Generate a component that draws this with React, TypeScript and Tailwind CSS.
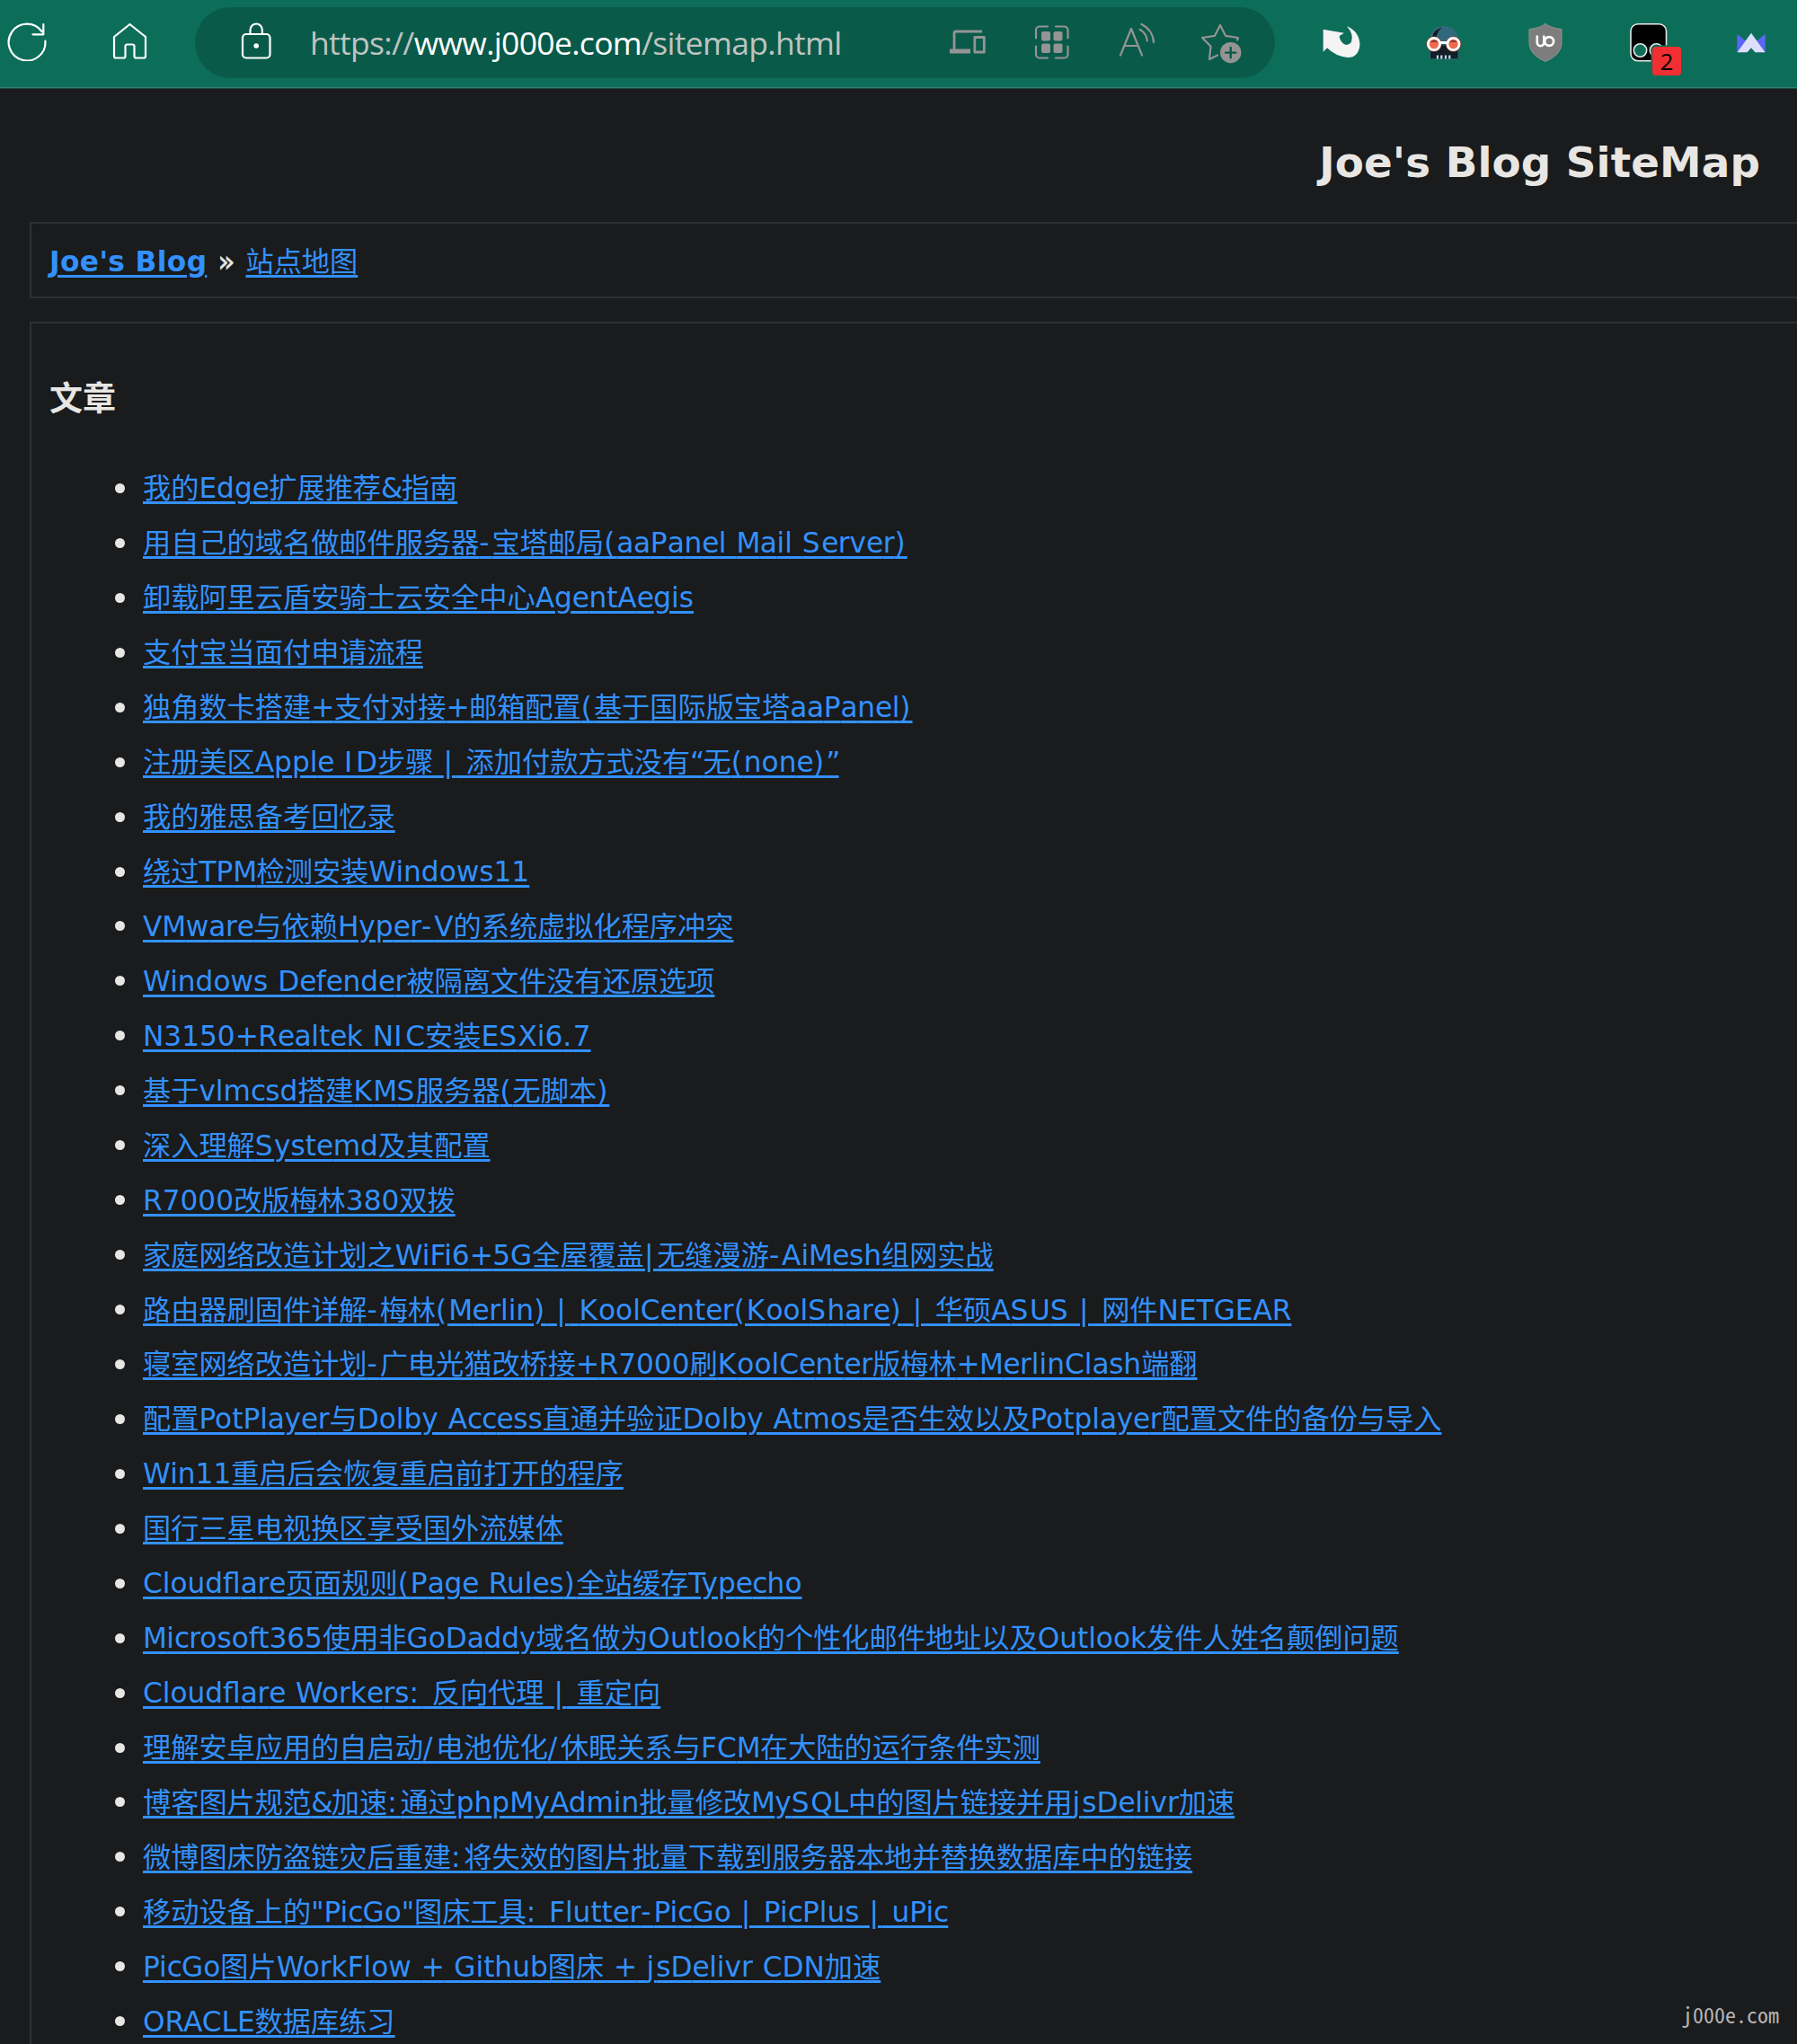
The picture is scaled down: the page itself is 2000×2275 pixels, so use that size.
import React from "react";

const articles = [
  "我的Edge扩展推荐&指南",
  "用自己的域名做邮件服务器-宝塔邮局(aaPanel Mail Server)",
  "卸载阿里云盾安骑士云安全中心AgentAegis",
  "支付宝当面付申请流程",
  "独角数卡搭建+支付对接+邮箱配置(基于国际版宝塔aaPanel)",
  "注册美区Apple ID步骤 | 添加付款方式没有“无(none)”",
  "我的雅思备考回忆录",
  "绕过TPM检测安装Windows11",
  "VMware与依赖Hyper-V的系统虚拟化程序冲突",
  "Windows Defender被隔离文件没有还原选项",
  "N3150+Realtek NIC安装ESXi6.7",
  "基于vlmcsd搭建KMS服务器(无脚本)",
  "深入理解Systemd及其配置",
  "R7000改版梅林380双拨",
  "家庭网络改造计划之WiFi6+5G全屋覆盖|无缝漫游-AiMesh组网实战",
  "路由器刷固件详解-梅林(Merlin) | KoolCenter(KoolShare) | 华硕ASUS | 网件NETGEAR",
  "寝室网络改造计划-广电光猫改桥接+R7000刷KoolCenter版梅林+MerlinClash端翻",
  "配置PotPlayer与Dolby Access直通并验证Dolby Atmos是否生效以及Potplayer配置文件的备份与导入",
  "Win11重启后会恢复重启前打开的程序",
  "国行三星电视换区享受国外流媒体",
  "Cloudflare页面规则(Page Rules)全站缓存Typecho",
  "Microsoft365使用非GoDaddy域名做为Outlook的个性化邮件地址以及Outlook发件人姓名颠倒问题",
  "Cloudflare Workers: 反向代理 | 重定向",
  "理解安卓应用的自启动/电池优化/休眠关系与FCM在大陆的运行条件实测",
  "博客图片规范&加速:通过phpMyAdmin批量修改MySQL中的图片链接并用jsDelivr加速",
  "微博图床防盗链灾后重建:将失效的图片批量下载到服务器本地并替换数据库中的链接",
  "移动设备上的\"PicGo\"图床工具: Flutter-PicGo | PicPlus | uPic",
  "PicGo图片WorkFlow + Github图床 + jsDelivr CDN加速",
  "ORACLE数据库练习",
];

// Extra advance for punctuation and a few capitals, giving them wider setting.
const tracking: Record<string, string> = {
  "|": "tracking-[0.117em]",
  ":": "tracking-[0.117em]",
  "/": "tracking-[0.117em]",
  I: "tracking-[0.126em]",
  "-": "tracking-[0.093em]",
  "(": "tracking-[0.064em]",
  ")": "tracking-[0.064em]",
  j: "tracking-[0.066em]",
  S: "tracking-[0.049em]",
  ".": "tracking-[0.046em]",
  K: "tracking-[0.037em]",
  "&": "tracking-[-0.053em]",
  "“": "tracking-[-0.059em]",
  "”": "tracking-[-0.059em]",
  e: "tracking-[-0.019em]",
  c: "tracking-[-0.029em]",
  a: "tracking-[-0.012em]",
  M: "tracking-[-0.02em]",
  "+": "tracking-[-0.02em]",
};

function Spaced({ text }: { text: string }) {
  return (
    <>
      {text.split(/([|:/I\-()jS.K&“”ecaM+])/).map((part, i) =>
        tracking[part] ? (
          <span key={i} className={tracking[part]}>
            {part}
          </span>
        ) : (
          part
        ),
      )}
    </>
  );
}

function Glyph({ className, box, children }: { className: string; box: string; children: React.ReactNode }) {
  return (
    <svg className={`shrink-0 ${className}`} viewBox={box} fill="none" strokeLinecap="round" strokeLinejoin="round">
      {children}
    </svg>
  );
}

function Toolbar() {
  return (
    <header className="flex h-[98px] shrink-0 items-start border-b border-[#32806f] bg-[#0c6e59] pt-2 shadow-[0_1px_0_#17493f]">
      <Glyph className="ml-2 mt-4 h-11 w-11" box="8 24 44 44">
        <path d="M50.400 45.500A20.400 20.400 0 1 1 46.500 35M48.300 27v11.300h-11.800" stroke="#fff" strokeWidth="2.2" />
      </Glyph>
      <Glyph className="ml-[72px] mt-4 h-11 w-10" box="124 24 40 44">
        <path d="M144.500 27l17.500 14v21.500a2 2 0 0 1-2 2h-8.500a2 2 0 0 1-2-2v-11a2 2 0 0 0-2-2h-6a2 2 0 0 0-2 2v11a2 2 0 0 1-2 2h-8.500a2 2 0 0 1-2-2V41z" stroke="#fff" strokeWidth="2.2" />
      </Glyph>
      <div className="ml-[53px] flex h-[79px] w-[1202px] items-start rounded-full bg-[#0a5a49]">
        <Glyph className="ml-[50px] mt-4 h-11 w-9" box="267 24 36 44">
          <rect x="270" y="38" width="30.500" height="26.500" rx="4" stroke="#fff" strokeWidth="2.2" />
          <path d="M278.500 37.500v-4a6.700 7 0 0 1 13.400 0v4" stroke="#fff" strokeWidth="2.200" />
          <circle cx="285.200" cy="51" r="2.800" fill="#fff" />
        </Glyph>
        <div className="ml-[42px] w-[710px] whitespace-nowrap font-['Open_Sans',sans-serif] text-[35.500px] leading-[78px] tracking-[-0.680px] text-[#bfc4c1]">
          https://<span className="text-white">www.j000e.com</span>/sitemap.html
        </div>
        <Glyph className="mt-4 h-11 w-11" box="1055 24 44 44">
          <path d="M1093 35h-29a2 2 0 0 0-2 2v18" stroke="#949494" strokeWidth="2.800" strokeLinecap="butt" />
          <path d="M1057 54.500h23v5h-23z" fill="#949494" />
          <rect x="1084.800" y="41.500" width="10.500" height="16.500" stroke="#949494" strokeWidth="2.800" />
        </Glyph>
        <Glyph className="ml-[52px] mt-4 h-11 w-10" box="1152 24 40 44">
          <path d="M1154 42.500v-9a4 4 0 0 1 4-4h9M1176 29.500h9.500a4 4 0 0 1 4 4v9M1154 51.500v9a4 4 0 0 0 4 4h9M1176 64.500h9.500a4 4 0 0 0 4-4v-9" stroke="#949494" strokeWidth="2.200" />
          <g fill="#949494">
            <rect x="1160" y="35" width="10" height="10.500" rx="2" />
            <rect x="1173.500" y="35" width="10" height="10.500" rx="2" />
            <rect x="1160" y="48.500" width="10" height="10.500" rx="2" />
            <rect x="1173.500" y="48.500" width="10" height="10.500" rx="2" />
          </g>
        </Glyph>
        <Glyph className="ml-[53px] mt-4 h-11 w-11" box="1245 24 44 44">
          <path d="M1248 61.500l12-29.500 12 29.500M1252.500 51h15M1271.500 27a24 24 0 0 1 13.500 20M1269.800 33a16 16 0 0 1 8 12.500" stroke="#949494" strokeWidth="2.200" />
        </Glyph>
        <Glyph className="ml-[47px] mt-4 h-12 w-12" box="1336 24 48 48">
          <path d="M1378 44.500l1-2.500-14-2.200-6-11.800-6 11.800-14 2.200 9.500 9.500-1.500 14.500 9-4.500" stroke="#949494" strokeWidth="2.200" />
          <circle cx="1370.700" cy="58.600" r="11.700" fill="#949494" />
          <path d="M1370.700 53v11.200M1365 58.600h11.400" stroke="#0a5a49" strokeWidth="2.400" />
        </Glyph>
      </div>
      <Glyph className="ml-[51px] mt-4 h-11 w-11" box="1470 24 44 44">
        <path d="M1472.700 32.700L1496 36.700 1490.700 40Q1491 45 1495 48.500 1500 52 1504 46.700 1507 38 1499 29.300 1513 35 1513.500 50 1512 64 1500 64 1486 62.500 1477 53.300L1472.700 57.700z" fill="#f4f4f4" />
      </Glyph>
      <Glyph className="ml-[71px] mt-4 h-11 w-11" box="1585 24 44 44">
        <path d="M1591.500 46q0-17 15.500-17t16 17z" fill="#31697c" />
        <path d="M1594 42q1-9 11-11.500-5 4-7 11.500z" fill="#151b24" />
        <path d="M1592 50h31v15.700h-31z" fill="#151d27" stroke="#31697c" strokeWidth="0.800" />
        <path d="M1600 61.500v4M1604.300 61.500v4M1609 61.500v4M1613.300 61.500v4" stroke="#b9dce8" strokeWidth="2.200" strokeLinecap="butt" />
        <circle cx="1596" cy="49" r="8.700" fill="#7a3b2e" />
        <circle cx="1617.500" cy="49" r="8.700" fill="#7a3b2e" />
        <path d="M1602 47.500h10" stroke="#fff" strokeWidth="3" />
        <circle cx="1596" cy="49" r="6.600" fill="#ee6a4c" stroke="#fff" strokeWidth="2.800" />
        <circle cx="1617.500" cy="49" r="6.600" fill="#ee6a4c" stroke="#fff" strokeWidth="2.800" />
        <path d="M1591.500 47a5 4.500 0 0 1 9 0zM1613 47a5 4.500 0 0 1 9 0z" fill="#8c3a33" />
      </Glyph>
      <Glyph className="ml-[71px] mt-4 h-12 w-10" box="1701 24 40 48">
        <path d="M1721 26.500q7 5 18 6v17q-1.500 12-18 19-16.500-7-18-19v-17q11-1 18-6z" fill="#7d7d7d" stroke="#929292" />
        <path d="M1711.800 40.500v7a3.800 3.800 0 0 0 7.600 0v-7" stroke="#fff" strokeWidth="2.600" />
        <circle cx="1725.200" cy="46" r="4.900" stroke="#fff" strokeWidth="2.600" />
      </Glyph>
      <div className="relative ml-[73px] mt-4 h-12 w-11 shrink-0">
        <Glyph className="h-12 w-11" box="1814 24 44 48">
          <rect x="1816" y="26.700" width="39.500" height="41" rx="8" fill="#000" stroke="#e8e8e8" strokeWidth="1.600" />
          <circle cx="1826.500" cy="56" r="7.200" fill="#0c6e59" stroke="#e8e8e8" strokeWidth="1.600" />
          <circle cx="1844.500" cy="56" r="7.200" fill="#0c6e59" stroke="#e8e8e8" strokeWidth="1.600" />
        </Glyph>
        <span className="absolute top-[28px] left-[26px] flex h-8 w-8 items-center justify-center rounded-[4px] bg-[#ef2f31] font-['Open_Sans',sans-serif] text-[25.500px] text-black shadow-[0_0_0_1.500px_#0c6e59]">2</span>
      </div>
      <Glyph className="ml-[74px] mt-4 h-11 w-9" box="1932 24 36 44">
        <path d="M1934.300 37.700l11 9-8 11.500h-3zM1965.700 37.700l-11 9 8 11.500h3z" fill="#5b66f5" />
        <path d="M1950 36.700l15.500 21.600h-11l-4.500-5-4.500 5h-11z" fill="#dcdffb" />
      </Glyph>
    </header>
  );
}

export default function App() {
  return (
    <div className="relative flex h-[2275px] w-[2000px] flex-col overflow-hidden bg-[#191b1c] font-['DejaVu_Sans','Noto_Sans_CJK_SC',sans-serif] text-[31.2px] text-[#e8e6e3]">
      <Toolbar />
      <h1 className="mt-[51px] mr-[41px] text-right text-[46.800px] leading-[64px] font-bold tracking-[0.100px]">Joe's Blog SiteMap</h1>
      <nav className="mt-[34px] ml-[33px] h-[85px] shrink-0 border-y-2 border-l-2 border-[#2d3031] pl-5 leading-[84px] whitespace-nowrap">
        <a className="font-bold tracking-[0.400px] text-[#3391ff] underline decoration-[2.500px] underline-offset-[4px]">Joe's Blog</a>
        <span className="mx-3 [-webkit-text-stroke:0.600px_#e8e6e3]">»</span>
        <a className="text-[#3391ff] underline decoration-[2.500px] underline-offset-[4px]">站点地图</a>
      </nav>
      <main className="mt-[26px] ml-[33px] flex-1 border-t-2 border-l-2 border-[#2d3031] pl-5">
        <h2 className="mt-[55px] text-[37px] leading-[60px] font-bold">文章</h2>
        <ul className="mt-[38px] ml-[73px]">
          {articles.map((title) => (
            <li key={title} className="flex h-[60.940px] items-center whitespace-nowrap">
              <span className="mr-5 h-[11px] w-[11px] shrink-0 rounded-full bg-[#e8e6e3]" />
              <a className="leading-[60px] text-[#3391ff] underline decoration-[2.500px] underline-offset-[4px] [word-spacing:0.034em]">
                <Spaced text={title} />
              </a>
            </li>
          ))}
        </ul>
      </main>
      <div className="absolute right-5 bottom-[15px] font-['Noto_Sans_Mono_CJK_SC','Liberation_Mono',monospace] text-[24px] leading-9 text-[#b5b5b5]">j000e.com</div>
    </div>
  );
}
